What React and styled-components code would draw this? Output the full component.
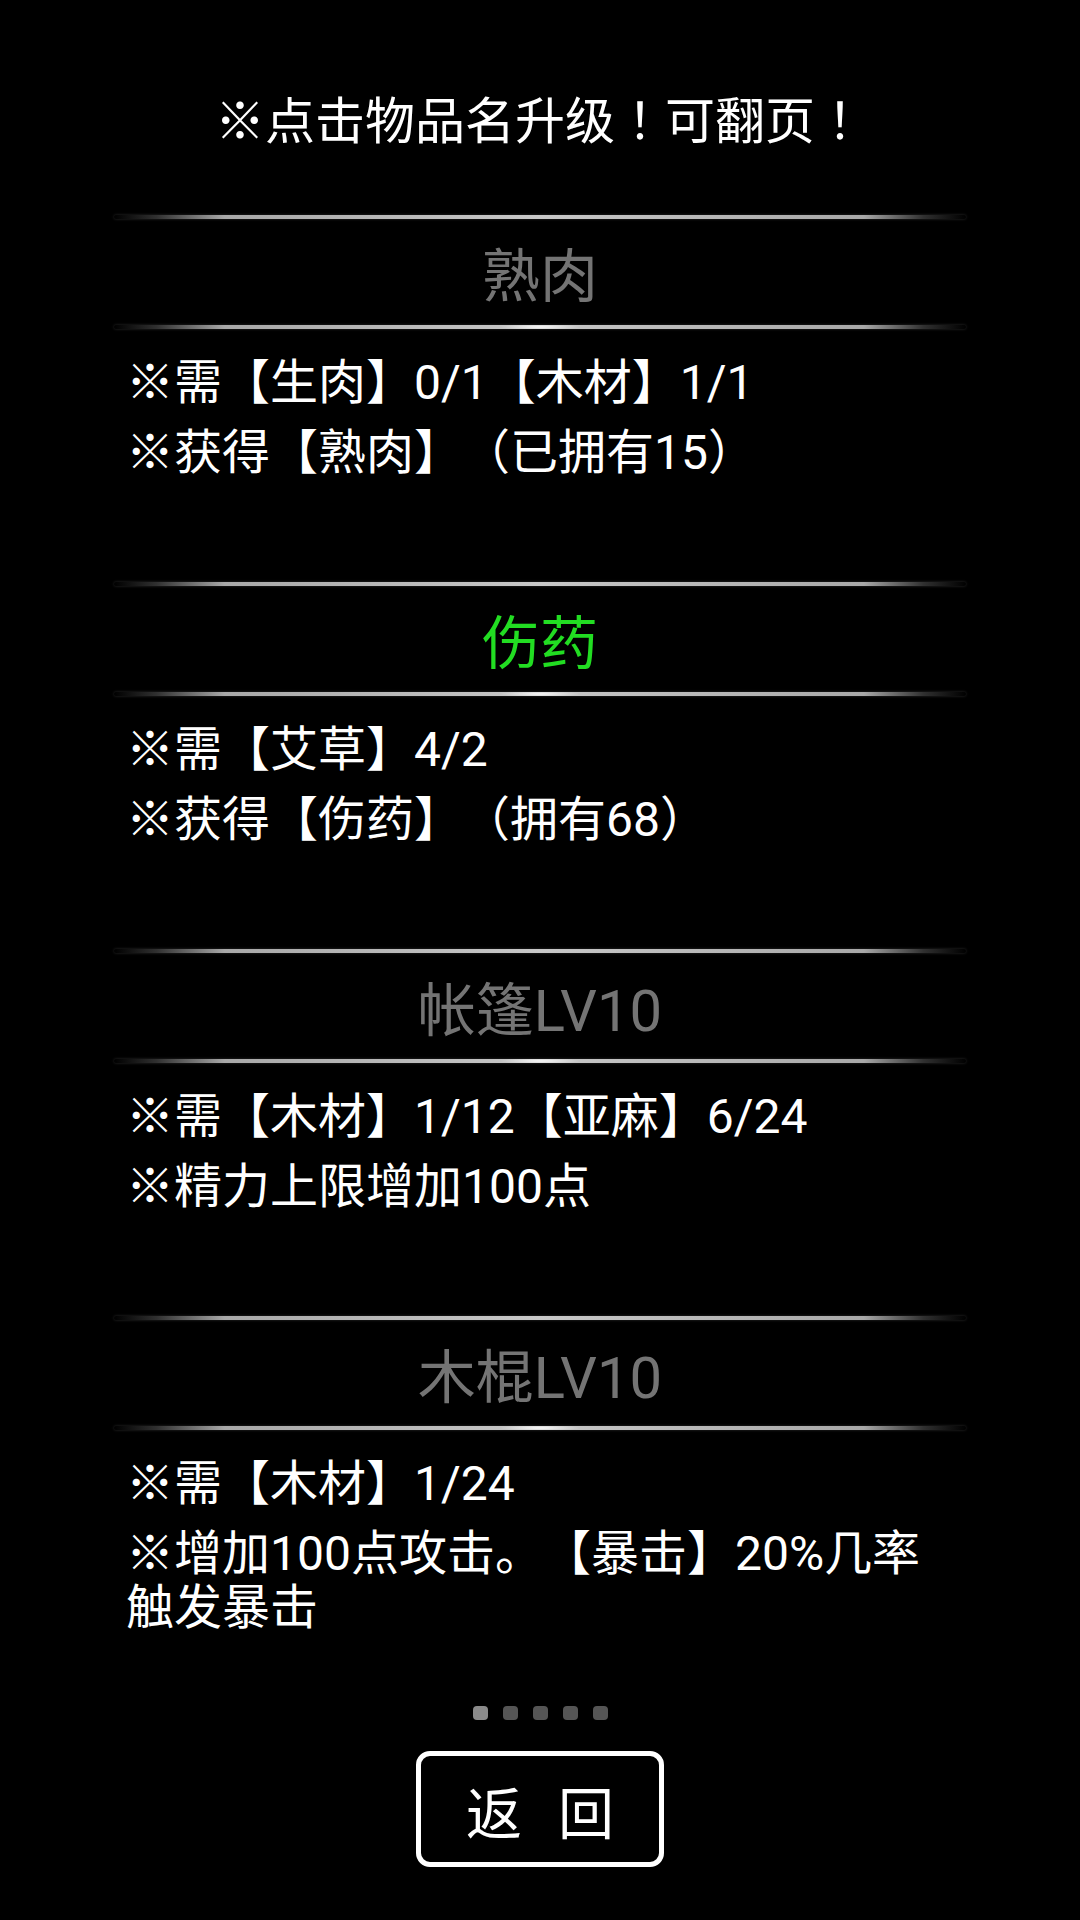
import React from "react";
import styled, { createGlobalStyle } from "styled-components";

const GlobalStyle = createGlobalStyle`
  html, body {
    margin: 0;
    padding: 0;
    background: #000;
  }
  body {
    font-family: Roboto, "Noto Sans CJK SC", "Noto Sans", sans-serif;
    color: #fff;
    text-spacing-trim: space-all;
  }
`;

const Page = styled.div`
  width: 1080px;
  min-height: 1920px;
  background: #000;
  display: flex;
  flex-direction: column;
  align-items: center;
  padding-top: 92px;
  box-sizing: border-box;
`;

const Notice = styled.div`
  height: 54px;
  display: flex;
  align-items: center;
  font-size: 50px;
  line-height: 54px;
  color: #fff;
  white-space: nowrap;
`;

// full-width mark with the glyph centred in its box, as on the device
const Bang = styled.span`
  font-family: "Noto Sans CJK TC", "Noto Sans CJK SC", sans-serif;
`;

const Panel = styled.div`
  width: 852px;
  margin-top: 69px;
  display: flex;
  flex-direction: column;
`;

const Section = styled.div`
  display: flex;
  flex-direction: column;
  margin-bottom: ${(p) => (p.$last ? "0" : "102px")};
`;

const Divider = styled.div`
  height: 4px;
  border-radius: 2px;
  background: ${(p) =>
      p.$glint
        ? "radial-gradient(ellipse 40px 3px at 50% 50%, rgba(255,255,255,0.9), rgba(255,255,255,0) 100%),"
        : ""}
    linear-gradient(
      90deg,
      rgba(160, 160, 160, 0) 0%,
      rgba(160, 160, 160, 0.3) 5%,
      #a8a8a8 13%,
      #c8c8c8 50%,
      #a8a8a8 88%,
      rgba(160, 160, 160, 0.3) 95%,
      rgba(160, 160, 160, 0) 100%
    );
  box-shadow: 0 0 3px rgba(255, 255, 255, 0.18);
`;

const Header = styled.div`
  height: 106px;
  display: flex;
  align-items: center;
  justify-content: center;
  font-size: 58px;
  color: ${(p) => (p.$active ? "#22dd22" : "#747474")};
`;

const Content = styled.div`
  padding: 27px 24px 0 12px;
  display: flex;
  flex-direction: column;
  gap: 16px;
`;

const Line = styled.div`
  font-size: 48px;
  line-height: 54px;
  color: #fff;
`;

const Dots = styled.div`
  display: flex;
  gap: 15px;
  margin-top: 71px;
`;

const Dot = styled.span`
  width: 15px;
  height: 14px;
  border-radius: 4px;
  background: ${(p) => (p.$on ? "#8a8a8a" : "#555")};
`;

const BackButton = styled.button`
  margin-top: 31px;
  width: 248px;
  height: 116px;
  box-sizing: border-box;
  border: 5px solid #fff;
  border-radius: 14px;
  background: #000;
  color: #fff;
  display: flex;
  align-items: center;
  justify-content: center;
  gap: 36px;
  font-family: Roboto, "Noto Sans CJK SC", sans-serif;
  font-size: 56px;
  padding: 0;
  cursor: pointer;
`;

const items = [
  {
    name: "熟肉",
    lines: ["※需【生肉】0/1【木材】1/1", "※获得【熟肉】（已拥有15）"],
  },
  {
    name: "伤药",
    active: true,
    lines: ["※需【艾草】4/2", "※获得【伤药】（拥有68）"],
  },
  {
    name: "帐篷LV10",
    lines: ["※需【木材】1/12【亚麻】6/24", "※精力上限增加100点"],
  },
  {
    name: "木棍LV10",
    lines: ["※需【木材】1/24", "※增加100点攻击。【暴击】20%几率触发暴击"],
  },
];

export default function App() {
  return (
    <>
      <GlobalStyle />
      <Page>
        <Notice>
          <span>
            ※点击物品名升级<Bang>！</Bang>可翻页<Bang>！</Bang>
          </span>
        </Notice>
        <Panel>
          {items.map((item, i) => (
            <Section key={item.name} $last={i === items.length - 1}>
              <Divider />
              <Header $active={item.active}>{item.name}</Header>
              <Divider $glint />
              <Content>
                {item.lines.map((l) => (
                  <Line key={l}>{l}</Line>
                ))}
              </Content>
            </Section>
          ))}
        </Panel>
        <Dots>
          {[0, 1, 2, 3, 4].map((n) => (
            <Dot key={n} $on={n === 0} />
          ))}
        </Dots>
        <BackButton>
          <span>返</span>
          <span>回</span>
        </BackButton>
      </Page>
    </>
  );
}
